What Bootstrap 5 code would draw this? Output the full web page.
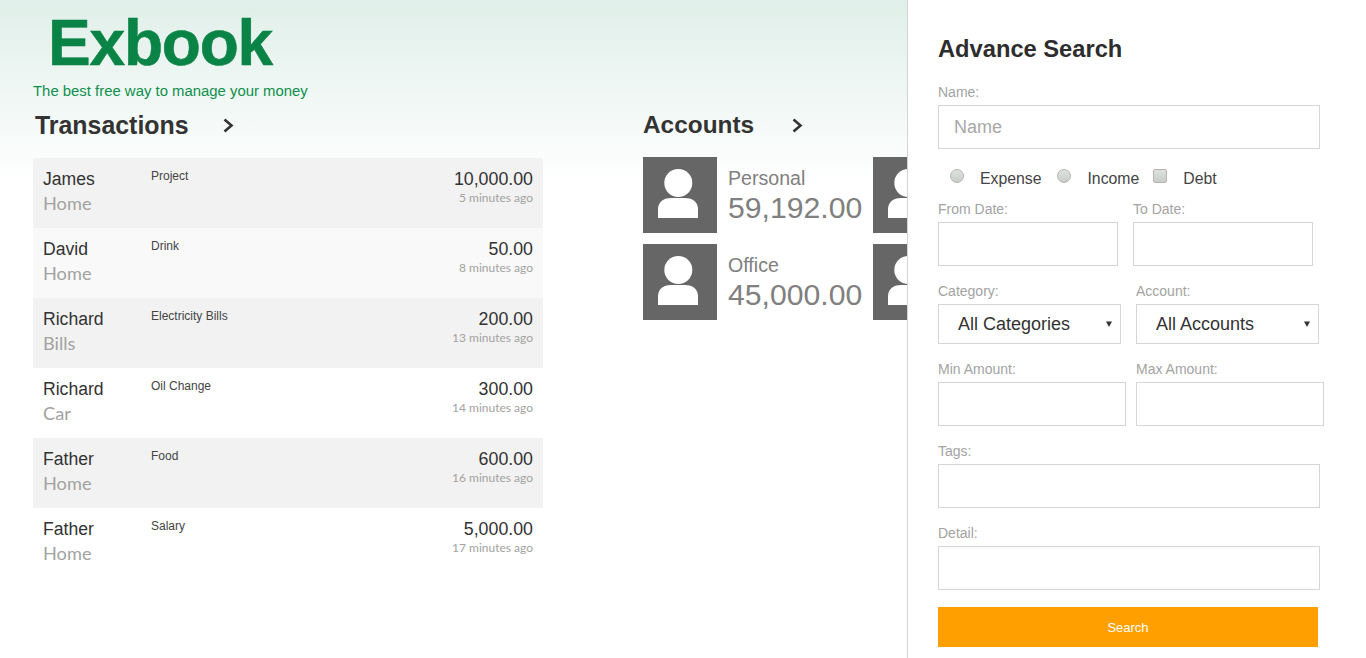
<!DOCTYPE html>
<html lang="en">
<head>
    <meta charset="UTF-8">
    <meta name="viewport" content="width=device-width, initial-scale=1.0">
    <title>Exbook</title>
    <link rel="stylesheet" href="https://cdn.jsdelivr.net/npm/bootstrap@5.3.0/dist/css/bootstrap.min.css">
    <style>
        html, body { height: 658px; overflow: hidden; }
        body { font-family: "Liberation Sans", Arial, sans-serif; color: #333; background: #fff; }
        .page-wrap { position: relative; height: 658px; overflow: hidden; padding-left: 33px;
            background: linear-gradient(to bottom, #e0efe9 0, #ffffff 185px, #ffffff 100%); }
        .logo-text { font-size: 64px; font-weight: 700; line-height: 64px; color: #0a8446; margin: 11px 0 0 15px; letter-spacing: -1.2px; -webkit-text-stroke: .6px #0a8446; }
        .logo-tag { font-size: 14.9px; line-height: 18px; color: #0f8f4d; margin: 7px 0 0; }
        .section-head { font-weight: 700; line-height: 30px; margin: 0; color: #333; }
        .chev { display: block; width: 11px; height: 15px; margin-top: 8px; }
        .tx-column { width: 510px; margin-right: 100px; }
        .tx-head { padding: 10px 0 0 2px; height: 58px; }
        .tx-head .section-head { width: 188px; font-size: 24.9px; }
        .tx-row { height: 70px; padding: 11px 10px 0; background: #fff; }
        .tx-row.shade { background: #f2f2f2; }
        .tx-row.pale { background: #f9f9f9; }
        .tx-name { width: 108px; }
        .tx-who { font-size: 17.6px; line-height: 20px; }
        .tx-place { font-family: Lato, "Open Sans", sans-serif; font-size: 18.2px; line-height: 22px; margin-top: 3px; color: #a2a2a0; }
        .tx-note { font-size: 12px; line-height: 14px; color: #444; }
        .tx-amount { font-size: 17.8px; line-height: 20px; }
        .tx-when { font-family: Lato, "Open Sans", sans-serif; font-size: 12px; line-height: 14px; margin-top: 2px; color: #a2a2a0; }
        .acc-head { padding-top: 10px; height: 57px; }
        .acc-head .section-head { width: 149px; font-size: 24.4px; }
        .acc-list { width: 460px; row-gap: 11px; }
        .acc-card { width: 230px; height: 76px; }
        .acc-tile { width: 74px; height: 76px; flex: none; background: #666; }
        .acc-tile svg { display: block; }
        .acc-info { padding-left: 11px; color: #808080; }
        .acc-name { font-size: 19.6px; line-height: 24px; margin-top: 9px; }
        .acc-sum { font-size: 30.2px; line-height: 34px; margin-top: 1px; white-space: nowrap; }
        .search-panel { position: absolute; top: 0; right: 0; width: 459px; height: 658px; background: #fff; border-left: 1px solid #d4d4d4; padding: 35px 0 0 30px; }
        .search-panel h2 { font-size: 23.7px; font-weight: 700; line-height: 28px; margin: 0 0 21px; color: #2d2d2d; }
        .field-label { display: block; font-size: 14px; line-height: 16px; margin: 0 0 5px; color: #a3a3a3; }
        .search-panel .form-control, .search-panel .form-select { height: 44px; border: 1px solid #d6d6d6; border-radius: 0; font-size: 18px; box-shadow: none; }
        .search-panel .form-control { padding: 0 15px; }
        .search-panel .form-control::placeholder { color: #a8a8a8; }
        .search-panel .form-select { height: 40px; padding: 0 24px 0 19px; color: #333;
            background-image: url("data:image/svg+xml,%3Csvg xmlns='http://www.w3.org/2000/svg' width='6' height='6'%3E%3Cpath d='M0 .5h6L3 6z' fill='%23333'/%3E%3C/svg%3E");
            background-size: 6px 6px; background-position: right 8px center; }
        .field-gap { margin-bottom: 17px; }
        .kind-row { height: 52px; padding: 20px 0 0 12px; font-size: 15.8px; line-height: 20px; color: #444; }
        .kind-row label { display: flex; align-items: flex-start; margin-right: 14px; }
        .kind-mark { appearance: none; -webkit-appearance: none; width: 14px; height: 14px; margin: 0 16px 0 0; flex: none;
            border: 1px solid #b5b5b5; background: linear-gradient(#dfe3df, #c9cdc9); }
        .kind-mark[type=radio] { border-radius: 50%; }
        .kind-mark[type=checkbox] { border-radius: 2px; }
        .kind-row .kind-first { margin-right: 16px; }
        .w-a { width: 180px; margin-right: 15px; }
        .w-b { width: 180px; }
        .w-c { width: 183px; margin-right: 15px; }
        .w-d { width: 183px; }
        .w-e { width: 188px; margin-right: 10px; }
        .w-f { width: 188px; }
        .w-full { width: 382px; }
        .search-btn { display: block; width: 380px; height: 40px; border: 0; border-radius: 0; background: #ffa000; color: #fff; font-size: 13px; padding: 1px 0 0; }
        .search-btn:hover { background: #ffa000; color: #fff; }
    </style>
</head>
<body>
    <div class="page-wrap">
        <div class="logo-text">Exbook</div>
        <p class="logo-tag">The best free way to manage your money</p>

        <div class="d-flex">
            <div class="tx-column">
                <div class="tx-head d-flex align-items-start">
                    <h2 class="section-head">Transactions</h2>
                    <svg class="chev" viewBox="0 0 11 15"><path d="M1.5 1.5 8.5 7.5 1.5 13.5" fill="none" stroke="#333" stroke-width="2.6"/></svg>
                </div>
                <div id="tx-list"></div>
            </div>

            <div>
                <div class="acc-head d-flex align-items-start">
                    <h2 class="section-head">Accounts</h2>
                    <svg class="chev" viewBox="0 0 11 15"><path d="M1.5 1.5 8.5 7.5 1.5 13.5" fill="none" stroke="#333" stroke-width="2.6"/></svg>
                </div>
                <div class="acc-list d-flex flex-wrap">
                    <div class="acc-card d-flex">
                        <div class="acc-tile"><svg width="74" height="76" viewBox="0 0 74 76"><circle cx="35.3" cy="26" r="14" fill="#fff"/><path d="M15 61V52C15 44 22 41 28 41H42C48 41 55 44 55 52V61Z" fill="#fff"/></svg></div>
                        <div class="acc-info"><div class="acc-name">Personal</div><div class="acc-sum">59,192.00</div></div>
                    </div>
                    <div class="acc-card d-flex">
                        <div class="acc-tile"><svg width="74" height="76" viewBox="0 0 74 76"><circle cx="35.3" cy="26" r="14" fill="#fff"/><path d="M15 61V52C15 44 22 41 28 41H42C48 41 55 44 55 52V61Z" fill="#fff"/></svg></div>
                    </div>
                    <div class="acc-card d-flex">
                        <div class="acc-tile"><svg width="74" height="76" viewBox="0 0 74 76"><circle cx="35.3" cy="26" r="14" fill="#fff"/><path d="M15 61V52C15 44 22 41 28 41H42C48 41 55 44 55 52V61Z" fill="#fff"/></svg></div>
                        <div class="acc-info"><div class="acc-name">Office</div><div class="acc-sum">45,000.00</div></div>
                    </div>
                    <div class="acc-card d-flex">
                        <div class="acc-tile"><svg width="74" height="76" viewBox="0 0 74 76"><circle cx="35.3" cy="26" r="14" fill="#fff"/><path d="M15 61V52C15 44 22 41 28 41H42C48 41 55 44 55 52V61Z" fill="#fff"/></svg></div>
                    </div>
                </div>
            </div>
        </div>

        <aside class="search-panel">
            <h2>Advance Search</h2>
            <label class="field-label">Name:</label>
            <input type="text" class="form-control w-full" placeholder="Name">

            <div class="kind-row d-flex">
                <label class="kind-first"><input type="radio" name="kind" class="kind-mark">Expense</label>
                <label><input type="radio" name="kind" class="kind-mark">Income</label>
                <label><input type="checkbox" class="kind-mark">Debt</label>
            </div>

            <div class="d-flex field-gap">
                <div class="w-a"><label class="field-label">From Date:</label><input type="text" class="form-control"></div>
                <div class="w-b"><label class="field-label">To Date:</label><input type="text" class="form-control"></div>
            </div>
            <div class="d-flex field-gap">
                <div class="w-c"><label class="field-label">Category:</label><select class="form-select"><option>All Categories</option></select></div>
                <div class="w-d"><label class="field-label">Account:</label><select class="form-select"><option>All Accounts</option></select></div>
            </div>
            <div class="d-flex field-gap">
                <div class="w-e"><label class="field-label">Min Amount:</label><input type="text" class="form-control"></div>
                <div class="w-f"><label class="field-label">Max Amount:</label><input type="text" class="form-control"></div>
            </div>
            <div class="field-gap">
                <label class="field-label">Tags:</label>
                <input type="text" class="form-control w-full">
            </div>
            <div class="field-gap">
                <label class="field-label">Detail:</label>
                <input type="text" class="form-control w-full">
            </div>
            <button class="btn search-btn">Search</button>
        </aside>
    </div>

    <script>
        var rows = [
            ["James", "Home", "Project", "10,000.00", "5 minutes ago", "shade"],
            ["David", "Home", "Drink", "50.00", "8 minutes ago", "pale"],
            ["Richard", "Bills", "Electricity Bills", "200.00", "13 minutes ago", "shade"],
            ["Richard", "Car", "Oil Change", "300.00", "14 minutes ago", ""],
            ["Father", "Home", "Food", "600.00", "16 minutes ago", "shade"],
            ["Father", "Home", "Salary", "5,000.00", "17 minutes ago", ""]
        ];
        document.getElementById("tx-list").innerHTML = rows.map(function (r) {
            return `<div class="tx-row d-flex ${r[5]}">
                <div class="tx-name"><div class="tx-who">${r[0]}</div><div class="tx-place">${r[1]}</div></div>
                <div class="tx-note flex-grow-1">${r[2]}</div>
                <div class="text-end"><div class="tx-amount">${r[3]}</div><div class="tx-when">${r[4]}</div></div>
            </div>`;
        }).join("");
    </script>
    <script src="https://cdn.jsdelivr.net/npm/bootstrap@5.3.0/dist/js/bootstrap.bundle.min.js"></script>
</body>
</html>
